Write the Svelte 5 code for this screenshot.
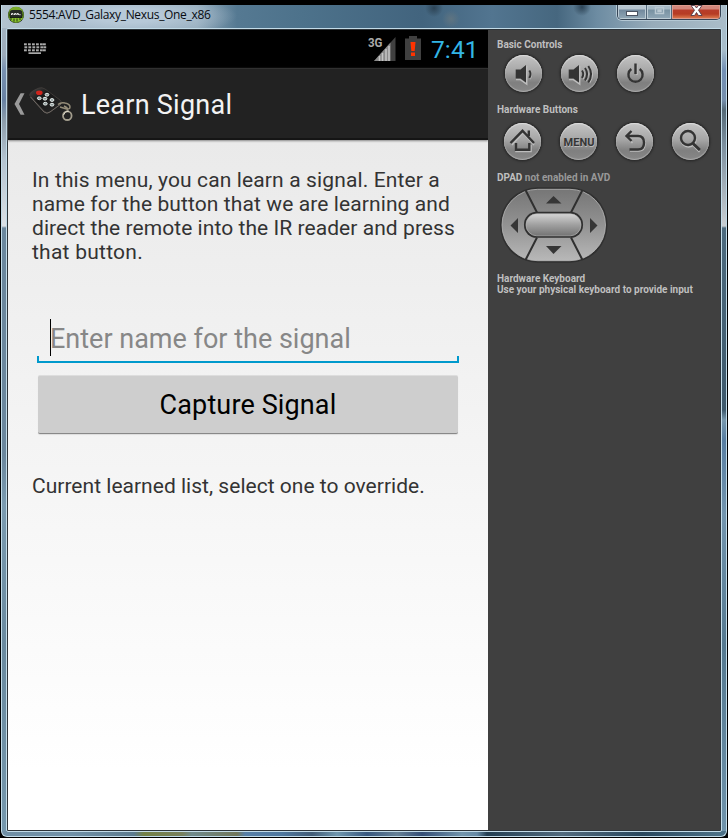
<script>
  const paragraph = [
    'In this menu, you can learn a signal. Enter a',
    'name for the button that we are learning and',
    'direct the remote into the IR reader and press',
    'that button.'
  ];
  const keyRows = [0, 3, 6];
  const keyCols = [0, 4, 8, 12, 16, 19];
</script>

<div class="desktop">
  <div class="window">
    <header class="titlebar">
      <svg class="appicon" width="18" height="18" viewBox="0 0 18 18">
        <circle cx="9" cy="9" r="8" fill="#101b08" />
        <path d="M2 5A8 8 0 0 1 16 5" fill="#78a82a" />
        <path d="M2 12H16A8 8 0 0 1 2 12" fill="#8bc52e" />
        <circle cx="9" cy="9" r="7.2" fill="none" stroke="#7db12c" stroke-width="1" />
        <rect x="3" y="4" width="12" height="7.500" rx="2" fill="#252a24" />
        <path d="M4.500 9V7.600H6V9M7.500 9V7.600H9V9M10 9V7.600H11.400V9M12.200 8.700H13.600" stroke="#eee" fill="none" />
        <path d="M4 12V14M7 12.500V15.500M10 12.500V15.500M13 12V14" stroke="#223512" />
      </svg>
      <span class="title">5554:AVD_Galaxy_Nexus_One_x86</span>
      <div class="winbuttons">
        <div class="wb min"><svg width="12" height="5"><rect x=".5" y=".5" width="11" height="4" fill="#fff" stroke="#4b5362" /></svg></div>
        <div class="wb max"><svg width="11" height="9"><path d="M1.500 1.500H9.500V7.500H1.500ZM4 4H7V5.500H4Z" fill="none" stroke="#b9c8d1" stroke-width="1.500" /></svg></div>
        <div class="wb close"><svg width="13" height="11" viewBox="0 0 13 11"><path d="M1 .5H4.600L6.500 3 8.400 .5H12L8.500 5.200 12 10.500H8.400L6.500 7.500 4.600 10.500H1L4.500 5.200Z" fill="#fff" stroke="#523b49" stroke-width=".9" /></svg></div>
      </div>
    </header>

    <div class="client">
      <main class="screen">
        <div class="status">
          <svg class="kbd" width="23" height="12" viewBox="0 0 23 12">
            {#each keyRows as y, r}
              {#each keyCols as x}
                <rect x={x + (r === 1 ? 0.4 : 0)} y={y + 0.3} width="2.8" height="2" fill="#aaa" />
              {/each}
            {/each}
            <rect x="4.500" y="9.300" width="12.500" height="1.700" fill="#aaa" />
          </svg>
          <svg class="signal" width="29" height="26" viewBox="0 0 29 26">
            <text x="0" y="10" textLength="14.500" lengthAdjust="spacingAndGlyphs" class="net">3G</text>
            <path d="M27.500 0V24H6Z" fill="#404040" />
            <path d="M22.500 5.500V24H6Z" fill="#8a8a8a" />
            <path d="M11.500 19V24M14.500 16V24M18 12V24M21 9V24" stroke="#c4c4c4" stroke-width="1.500" />
          </svg>
          <svg class="battery" width="16" height="24" viewBox="0 0 16 24">
            <path d="M0 2.500H4V0H12V2.500H16V24H0Z" fill="#404040" />
            <path d="M5.500 6H10.500L9.700 15H6.300ZM6 16.500H10V20H6Z" fill="#ff3300" />
          </svg>
          <span class="clock">7:41</span>
        </div>

        <div class="actionbar">
          <svg class="back" width="11" height="22" viewBox="0 0 11 22"><path d="M10.500 .3H6.600L.5 11L6.600 21.700H10.500L5 11Z" fill="#999" /></svg>
          <svg class="remote" width="45" height="36" viewBox="0 0 45 36">
            <defs><linearGradient id="rm" x1="0" y1="0" x2="1" y2="1"><stop stop-color="#4a4a4a" /><stop offset=".4" stop-color="#151515" /><stop offset="1" stop-color="#2b2b2b" /></linearGradient></defs>
            <path d="M1 6.500Q3 3.500 10 1Q13 0 16 2L31 13Q34 15 31 17.500L21 25Q18 27 15 24L2 10Q0 8.500 1 6.500Z" fill="url(#rm)" stroke="#45403d" stroke-width=".8" />
            <path d="M1.500 10L15 25Q18 27.500 21 25L32 17" fill="none" stroke="#77716b" stroke-width=".9" />
            <ellipse cx="10.300" cy="5.700" rx="3.300" ry="2.300" fill="#d0251d" />
            <g fill="#8f9c9c" stroke="#e4ebe9" stroke-width="1">
              <ellipse cx="10.300" cy="11.300" rx="1.900" ry="1.400" /><ellipse cx="18" cy="7.700" rx="1.900" ry="1.400" /><ellipse cx="16" cy="11.700" rx="1.900" ry="1.400" /><ellipse cx="23" cy="13" rx="1.900" ry="1.400" /><ellipse cx="16.300" cy="16.700" rx="1.900" ry="1.400" /><ellipse cx="23" cy="17.700" rx="1.900" ry="1.400" />
            </g>
            <path d="M29 17.500Q32 15 36 16Q41 17 41 20Q41 23 36 21.500L31 20M35 19Q40 21 38 24" fill="none" stroke="#958d79" stroke-width="1.500" />
            <ellipse cx="38.300" cy="28.700" rx="4.300" ry="4.300" fill="none" stroke="#a39d8d" stroke-width="1.800" />
            <path d="M34.500 28Q35.500 24 40 24" fill="none" stroke="#e0dccd" />
          </svg>
          <h1>Learn Signal</h1>
        </div>

        <div class="content">
          <p>{#each paragraph as line, i}<span class="l{i}">{line}</span>{/each}</p>
          <div class="field">
            <span class="caret"></span><span class="placeholder">Enter name for the signal</span>
          </div>
          <button class="capture"><span>Capture Signal</span></button>
          <p class="note"><span>Current learned list, select one to override.</span></p>
        </div>
      </main>

      <aside>
        <h2 class="basic"><span>Basic Controls</span></h2>
        <div class="row first">
          <div class="round">
            <svg width="37" height="37" viewBox="0 0 37 37">
              <path class="hi" d="M11 24.500H15L21.700 29V11M25 16Q27.500 20 25 24" />
              <path class="fill" d="M10.700 14.500H15.500L21 10V27.500L15.500 23.500H10.700Z" />
              <path class="line" d="M24.300 15.500Q26.800 19 24.300 23" />
            </svg>
          </div>
          <div class="round">
            <svg width="37" height="37" viewBox="0 0 37 37">
              <path class="hi" d="M8 24.500H12L18.700 29V11M22 16Q24.500 20 22 24M25 14Q29 20 25 26M28.500 12Q34 20 28.500 28" />
              <path class="fill" d="M7.700 14.500H12.500L18 10V27.500L12.500 23.500H7.700Z" />
              <path class="line" d="M21 15.500Q23.500 19 21 23M24 13Q28.200 19 24 25.500M27.300 11Q32.800 19 27.300 27.500" />
            </svg>
          </div>
          <div class="round">
            <svg width="37" height="37" viewBox="0 0 37 37">
              <path class="hi" d="M13.500 14.500A7.100 7.100 0 1 0 23.500 14.500M20 10V20" /><path class="power" d="M14.300 14A7.100 7.100 0 1 0 22.700 14M18.500 8.500V19" />
            </svg>
          </div>
        </div>
        <h2 class="hardware"><span>Hardware Buttons</span></h2>
        <div class="row second">
          <div class="round">
            <svg width="37" height="37" viewBox="0 0 37 37">
              <path class="hi" d="M8 22L19 10L30 22M12 22V28.500H27V22" />
              <path class="home" d="M6.500 20L18.500 7.800L30 20M12 20V26.800H25.300V20M24.800 7.500V13" />
            </svg>
          </div>
          <div class="round"><svg width="37" height="37" viewBox="0 0 37 37"><text x="4" y="24" textLength="31" class="menu mhi">MENU</text><text x="3.500" y="23" textLength="31" class="menu">MENU</text></svg></div>
          <div class="round">
            <svg width="37" height="37" viewBox="0 0 37 37">
              <path class="hi" d="M16.500 9.500L11 14.500L16.500 20M11 14.500H23Q29 14.500 29 21T23 28H14" />
              <path class="power" d="M15.500 8L10.500 13L15.500 18M11 13H22Q28 13 28 19.700T22 26.500H13.500" />
            </svg>
          </div>
          <div class="round">
            <svg width="37" height="37" viewBox="0 0 37 37">
              <path class="hi" d="M21 22.500L27.500 29" /><circle class="hi" cx="16.500" cy="16.500" r="7.500" />
              <circle class="power" cx="16" cy="15" r="7" /><path class="power thick" d="M21 20.500L27.800 27" />
            </svg>
          </div>
        </div>
        <h2 class="dtitle"><span>DPAD <i>not enabled in AVD</i></span></h2>
        <svg class="dpad" width="110" height="78" viewBox="0 0 110 78">
          <defs>
            <linearGradient id="dp" x2="0" y2="1"><stop stop-color="#767676" /><stop offset=".5" stop-color="#929292" /><stop offset="1" stop-color="#b8b8b8" /></linearGradient>
            <linearGradient id="pill" x2="0" y2="1"><stop stop-color="#d4d4d4" /><stop offset=".5" stop-color="#a0a0a0" /><stop offset="1" stop-color="#747474" /></linearGradient>
          </defs>
          <rect x="1" y="1.300" width="107.500" height="75.400" rx="37.700" fill="#303030" />
          <rect x="3" y="3.300" width="103.500" height="71.400" rx="35.700" fill="url(#dp)" stroke="#b9b9b9" stroke-width=".8" />
          <path d="M26.500 4L38 26.500M83.500 4L72 26.500M26.500 74L38 51.500M83.500 74L72 51.500" stroke="#303030" stroke-width="2" />
          <rect x="25" y="25.800" width="59" height="26" rx="12.500" fill="#303030" />
          <rect x="27" y="27.800" width="55" height="22" rx="10.800" fill="url(#pill)" stroke="#bebebe" stroke-width=".6" />
          <path d="M47 17.500H62.500L54.500 10ZM47 60H62.500L54.500 68ZM19 32V47L11.500 39.500ZM91 32V47L98.500 39.500Z" fill="#363636" />
        </svg>
        <h2 class="kb"><span>Hardware Keyboard</span></h2>
        <h2 class="kb2"><span>Use your physical keyboard to provide input</span></h2>
      </aside>
    </div>
  </div>
</div>

<style>
  :global(body) { margin: 0; background: #000; }
  .desktop { width: 728px; height: 838px; box-sizing: border-box; padding: 5px 1px 1px 1px; background: #000; overflow: hidden; }
  .window {
    box-sizing: border-box; height: 832px; border: 1px solid #c2dbe8; border-top: 0; border-radius: 0 0 6px 6px; padding: 0 4px 4px; overflow: hidden;
    background:
      linear-gradient(90deg, #708fa5 0, #7191a7 70px, #5c7b8e 132px, #738146 142px, #78805c 180px, #708a8c 190px, #71775a 235px, #577fa7 243px, #4f789f 280px, #425d77 310px, #7097ae 335px, #38587f 365px, #668196 395px, #344e76 420px, #7295ac 460px, #668aa5 475px, #233f53 485px, #526b7e 560px, #29485e 640px, #4b7086 716px) 0 826px / 100% 5px no-repeat,
      linear-gradient(#a9bac7 0, #9cabba 50px, #7891b1 65px, #6881a2 95px, #8c9caa 115px, #b4c3d0 155px, #dbe0e5 221px, #6b879d 223px, #6b879d 450px, #7b9bb0 500px, #6a8a9f 640px, #7698ad 100%) 0 0 / 6px 100% no-repeat,
      linear-gradient(#a8bdca 0, #a8bdca 45px, #7390b5 65px, #768fac 95px, #556a77 105px, #7c8f9e 140px, #c9ced2 221px, #4d6b7f 223px, #3e596c 405px, #7898ad 415px, #587ea2 435px, #7395ae 510px, #557990 640px, #7094ac 100%) 100% 0 / 6px 100% no-repeat;
  }
  .titlebar {
    height: 23px; margin: 0 -4px; display: flex; align-items: flex-start; padding-left: 6px;
    background:
      radial-gradient(ellipse 110px 22px at 125px 11px, #b7c9d8 30%, transparent 100%),
      radial-gradient(circle 9px at 449px 14px, #5f7481, transparent),
      radial-gradient(ellipse 9px 9px at 432px 3px, #2d4456, transparent),
      radial-gradient(ellipse 9px 9px at 580px 2px, #2d4456, transparent),
      linear-gradient(90deg, #b3c3cf 0, #9cb1c2 90px, #91a9ba 195px, #557992 235px, #4d728b 300px, #42647e 420px, #527590 490px, #46677f 555px, #6d8ca2 595px, #97acba 650px, #aabdc9 100%);
  }
  .appicon { margin: 1px 0 0 -1px; flex: none; }
  .title { margin: 2px 0 0 4px; font: 12px/16px "Open Sans", "Noto Sans", sans-serif; letter-spacing: -.33px; color: #080b10; white-space: nowrap; }
  .winbuttons { margin: 0 5px 0 auto; width: 104px; height: 15px; box-sizing: border-box; display: flex; border: 1px solid #354455; border-top: 0; border-radius: 0 0 5px 5px; box-shadow: 0 0 0 1px #b4c8d4; overflow: hidden; }
  .wb { display: flex; align-items: center; justify-content: center; height: 14px; background: linear-gradient(#b7c5cf 0 4px, #72899d 5px, #91a8b7); box-shadow: inset 0 0 0 1px #bdccd5; }
  .min { width: 28px; }
  .min svg { margin-top: 2px; }
  .max { width: 26px; border: solid #53687a; border-width: 0 1px; box-sizing: border-box; background: linear-gradient(#a6b9c5 0 4px, #7891a1 5px, #91a8b7); }
  .max svg { margin-bottom: 4px; }
  .close { flex: 1; background: linear-gradient(#d3877c 0 4px, #b73d2b 5px, #b63c24 9px, #e18455); box-shadow: inset 0 0 0 1px #dc9b8e; }
  .close svg { margin-bottom: 4px; }
  .client { box-sizing: border-box; height: 804px; border: 1px solid #c2dbe8; border-radius: 2px; display: flex; background: #2d3338; padding: 1px; }
  .screen { width: 480px; height: 800px; display: flex; flex-direction: column; font-family: Roboto, sans-serif; background: linear-gradient(#e8e8e8 0, #eaeaea 110px, #fff 740px); flex: none; }
  .status { height: 38px; background: #000; display: flex; }
  .kbd { margin: 13px 0 0 16px; }
  .signal { margin: 7px 0 0 321px; flex: none; }
  .net { font: bold 12px Roboto, sans-serif; fill: #aaa; }
  .battery { margin: 6px 0 0 8px; flex: none; }
  .clock { margin: 6px 0 0 10px; font-size: 24.500px; line-height: 28px; letter-spacing: .1px; color: #33b5e5; white-space: nowrap; }
  .actionbar { height: 72px; box-sizing: border-box; border-top: 1px solid #303030; border-bottom: 2px solid #151515; background: #222; display: flex; box-shadow: 0 1px 2px #888; }
  .back { margin: 24px 0 0 6px; flex: none; }
  .remote { margin: 18px 0 0 4px; flex: none; }
  h1 { margin: 20px 0 0 7px; font-size: 27px; line-height: 32px; font-weight: 400; letter-spacing: .25px; color: #f3f3f3; white-space: nowrap; }
  .content { display: flex; flex-direction: column; padding: 28px 29px 0 24px; }
  p { margin: 0; font-size: 21px; line-height: 24px; color: #333; white-space: nowrap; }
  p span { display: block; }
  .l0 { letter-spacing: .13px; }
  .l1 { letter-spacing: .1px; }
  .l2 { letter-spacing: .06px; }
  .l3 { letter-spacing: .25px; }
  .field { margin: 55px 0 0 5px; height: 44px; box-sizing: border-box; display: flex; padding-left: 13px; border-bottom: 2px solid #0099cc; background: linear-gradient(#09c, #09c) 0 100% / 2px 5px no-repeat, linear-gradient(#09c, #09c) 100% 100% / 2px 5px no-repeat; }
  .caret { width: 1px; height: 37px; margin-right: -1px; background: #000; }
  .placeholder { font-size: 27px; line-height: 41px; color: #878787; white-space: nowrap; }
  .capture { margin: 12px 0 0 6px; width: 420px; height: 59px; padding: 2px 0 0; border: 0; border-bottom: 1px solid #888; border-top: 1px solid #ddd; border-radius: 2px; background: #cecece; font: 27px/55px Roboto, sans-serif; letter-spacing: .13px; color: #000; box-shadow: 0 1px 1px #ddd; }
  .note { margin-top: 40px; letter-spacing: .02px; }
  aside { flex: 1; background: #404040; display: flex; flex-direction: column; align-items: flex-start; }
  h2 { margin: 0 0 0 9px; height: 12px; font: bold 10px/12px Roboto, sans-serif; color: #bfbfbf; white-space: nowrap; }
  i { font-style: normal; color: #999; }
  .basic { margin-top: 9px; }
  .row { display: flex; gap: 19px; }
  .first { margin: 4px 0 0 17px; }
  .second { margin: 7px 0 0 16px; }
  .round { width: 37px; height: 37px; box-sizing: border-box; border-radius: 50%; background: linear-gradient(#c4c4c4, #a6a6a6 45%, #7f7f7f 75%, #888); box-shadow: inset 0 1px 1px #ddd, inset 0 -1px 1px #aaa, 0 0 2px 1.500px #2b2b2b; }
  .round svg { display: block; }
  .round path, .round circle { fill: none; stroke-width: 2.400; }
  .round .hi { stroke: #bdbdbd; stroke-width: 1.500; }
  .round .fill { fill: #343434; }
  .round .line, .round .power, .round .home { stroke: #343434; }
  .round .line { stroke-width: 2; }
  .round .thick { stroke-width: 3; }
  .menu { font: bold 11px Roboto, sans-serif; fill: #363636; }
  .mhi { fill: #bbb; }
  .hardware { margin-top: 12px; }
  .dtitle { margin-top: 12px; }
  .dpad { margin: 2px 0 0 11px; }
  .kb { margin-top: 9px; }
  .kb2 { margin-top: -1px; }
</style>
